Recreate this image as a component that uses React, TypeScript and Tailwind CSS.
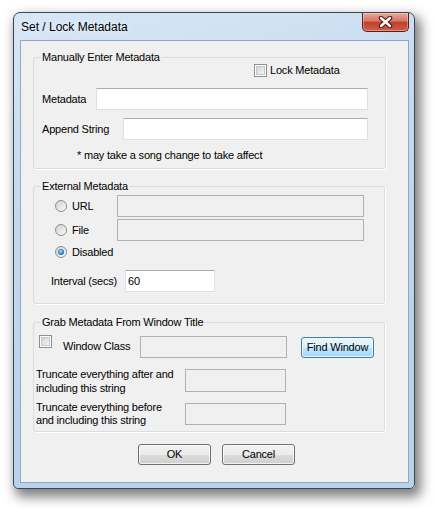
import React from 'react';

function CheckBox() {
  return (
    <span className="block w-[13px] h-[13px] shrink-0 border border-[#8e8f8f] bg-white p-[1px]">
      <span className="block w-full h-full border border-[#c4c7cc] bg-[linear-gradient(135deg,#cfd2d6,#f4f4f4)]" />
    </span>
  );
}

function Radio({ checked = false }: { checked?: boolean }) {
  return (
    <span className="flex items-center justify-center w-[12px] h-[12px] shrink-0 rounded-full border border-[#8e8f8f] bg-[linear-gradient(135deg,#cfd0d2,#fbfbfb)]">
      {checked && (
        <span className="block w-[6px] h-[6px] rounded-full bg-[radial-gradient(circle_at_45%_40%,#a9defc,#2f7fc4_55%,#163f66)]" />
      )}
    </span>
  );
}

function TextBox({ className = '', disabled = false, value = '' }: { className?: string; disabled?: boolean; value?: string }) {
  return (
    <input
      readOnly
      defaultValue={value}
      className={
        'h-[22px] px-[2px] outline-none text-[11px] ' +
        (disabled
          ? 'border border-[#adb2b5] bg-[#f0f0f0] '
          : 'border border-[#dbdfe6] border-t-[#abadb3] bg-white ') +
        className
      }
    />
  );
}

function Button({ children, active = false, className = '' }: { children: React.ReactNode; active?: boolean; className?: string }) {
  return (
    <button
      className={
        'h-[21px] w-[73px] rounded-[3px] border text-[11px] leading-none shadow-[inset_0_0_0_1px_rgba(255,255,255,0.7)] ' +
        (active
          ? 'border-[#3c7fb1] bg-[linear-gradient(#eaf6fd,#d9f0fc_50%,#bee6fd_50%,#a7d9f5)] '
          : 'border-[#707070] bg-[linear-gradient(#f2f2f2,#ebebeb_50%,#dddddd_50%,#cfcfcf)] ') +
        className
      }
    >
      {children}
    </button>
  );
}

function Group({ title, className, children }: { title: string; className: string; children: React.ReactNode }) {
  return (
    <div className={'relative ml-[12px] rounded-[3px] border border-[#d5dfe5] shadow-[1px_1px_0_#fff] ' + className}>
      <span className="absolute -top-[7px] left-[7px] bg-[#f0f0f0] px-[1px] leading-[13px]">{title}</span>
      {children}
    </div>
  );
}

export default function App() {
  return (
    <div className="min-h-screen bg-white pl-[13px] pt-[12px] font-['Liberation_Sans',Arial,sans-serif] text-[11px] tracking-[-0.2px] text-black">
      <div className="relative flex h-[477px] w-[402px] flex-col rounded-t-[7px] rounded-b-[5px] border border-[#3a4652] bg-[linear-gradient(165deg,#d8e7f6,#c3d9ef_35%,#bad3ed_70%,#b9d2ec)] shadow-[4px_6px_12px_2px_rgba(0,0,0,0.5)]">
        {/* Title bar */}
        <div className="flex h-[27px] items-center pl-[7px] text-[12px] tracking-normal [text-shadow:0_0_6px_#fff]">
          Set / Lock Metadata
        </div>
        <div className="absolute right-[5px] top-0 flex h-[19px] w-[47px] items-center justify-center rounded-b-[5px] border border-t-0 border-[#5a1e15] bg-[linear-gradient(#eaa89a,#d67462_45%,#c23f2c_52%,#cf5e4a)] shadow-[inset_0_0_0_1px_rgba(255,255,255,0.35)]">
          <svg width="15" height="12" viewBox="0 0 15 12">
            <path d="M3 2 L12 10 M12 2 L3 10" stroke="#4a1810" strokeWidth="4.5" strokeLinecap="round" />
            <path d="M3 2 L12 10 M12 2 L3 10" stroke="#fff" strokeWidth="2.4" strokeLinecap="round" />
          </svg>
        </div>

        {/* Client area */}
        <div className="ml-[6px] mr-[5px] mb-[5px] flex flex-1 flex-col border border-[#93a8bf] bg-[#f0f0f0]">
          <Group title="Manually Enter Metadata" className="mt-[16px] h-[112px] w-[353px]">
            <div className="flex flex-col pl-[8px] pt-[6px]">
              <div className="ml-[212px] flex h-[13px] items-center gap-[3px] leading-[13px]">
                <CheckBox />
                <span>Lock Metadata</span>
              </div>
              <div className="mt-[11px] flex items-center">
                <span className="w-[54px]">Metadata</span>
                <TextBox className="w-[272px]" />
              </div>
              <div className="mt-[8px] flex items-center">
                <span className="w-[81px]">Append String</span>
                <TextBox className="w-[245px]" />
              </div>
              <div className="ml-[35px] mt-[8px] leading-[14px]">* may take a song change to take affect</div>
            </div>
          </Group>

          <Group title="External Metadata" className="mt-[17px] h-[118px] w-[352px]">
            <div className="flex flex-col pt-[8px]">
              <div className="flex items-center pl-[21px]">
                <div className="flex w-[62px] items-center gap-[5px]">
                  <Radio />
                  <span>URL</span>
                </div>
                <TextBox disabled className="w-[247px]" />
              </div>
              <div className="mt-[2px] flex items-center pl-[21px]">
                <div className="flex w-[62px] items-center gap-[5px]">
                  <Radio />
                  <span>File</span>
                </div>
                <TextBox disabled className="w-[247px]" />
              </div>
              <div className="flex h-[22px] items-center gap-[5px] pl-[21px]">
                <Radio checked />
                <span>Disabled</span>
              </div>
              <div className="mt-[7px] flex items-center pl-[17px]">
                <span className="w-[74px]">Interval (secs)</span>
                <TextBox value="60" className="w-[90px]" />
              </div>
            </div>
          </Group>

          <Group title="Grab Metadata From Window Title" className="mt-[18px] h-[110px] w-[352px]">
            <div className="flex flex-col pt-[12px]">
              <div className="flex items-start pl-[5px]">
                <CheckBox />
                <span className="ml-[11px] mt-[5px] w-[77px] leading-[13px]">Window Class</span>
                <TextBox disabled className="mt-[1px] w-[147px]" />
                <Button active className="ml-[14px] mt-[2px]">
                  Find Window
                </Button>
              </div>
              <div className="mt-[11px] flex h-[23px] items-center pl-[2px]">
                <span className="w-[149px] leading-[14px]">
                  Truncate everything after and
                  <br />
                  including this string
                </span>
                <TextBox disabled className="h-[23px] w-[101px]" />
              </div>
              <div className="mt-[11px] flex h-[22px] items-center pl-[2px]">
                <span className="w-[149px] leading-[13px]">
                  Truncate everything before
                  <br />
                  and including this string
                </span>
                <TextBox disabled className="w-[101px]" />
              </div>
            </div>
          </Group>

          <div className="mt-[12px] flex gap-[11px] pl-[117px]">
            <Button>OK</Button>
            <Button>Cancel</Button>
          </div>
        </div>
      </div>
    </div>
  );
}
